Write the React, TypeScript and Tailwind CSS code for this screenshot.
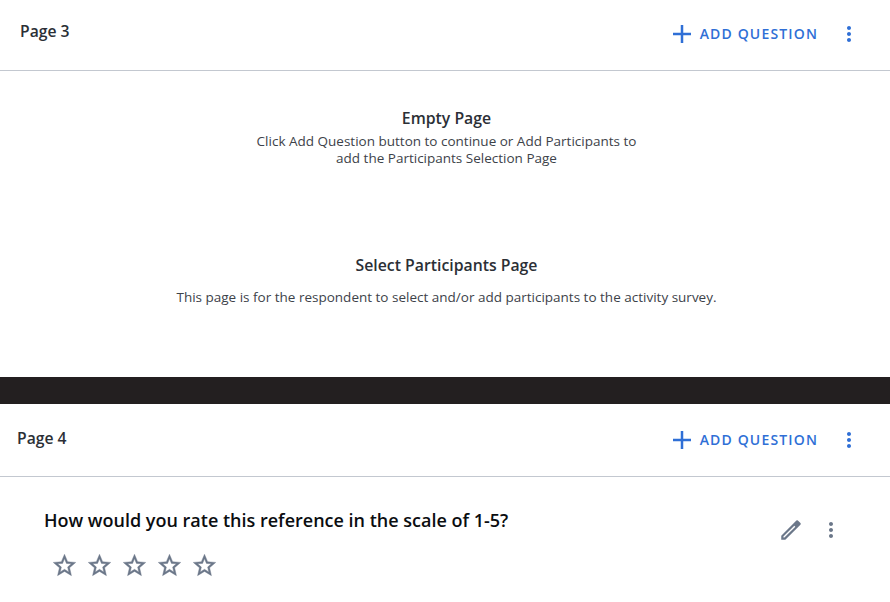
import React from 'react';

const font = "font-['Open_Sans',sans-serif]";

const PlusIcon = () => (
    <svg width="24" height="24" viewBox="0 0 24 24" className="fill-[#2f6fd6]">
        <path d="M21 13.25h-7.75V21h-2.5v-7.75H3v-2.5h7.75V3h2.5v7.75H21z" />
    </svg>
);

const MoreIcon = ({ className }: { className: string }) => (
    <svg width="24" height="24" viewBox="0 0 24 24" className={className}>
        <path d="M12 8c1.1 0 2-.9 2-2s-.9-2-2-2-2 .9-2 2 .9 2 2 2zm0 2c-1.1 0-2 .9-2 2s.9 2 2 2 2-.9 2-2-.9-2-2-2zm0 6c-1.1 0-2 .9-2 2s.9 2 2 2 2-.9 2-2-.9-2-2-2z" />
    </svg>
);

const PencilIcon = () => (
    <svg width="26" height="26" viewBox="0 0 24 24" className="fill-[#6b7789]">
        <path
            fillRule="evenodd"
            d="M3 17.25V21h3.75L20.71 7.04a1 1 0 0 0 0-1.41l-2.34-2.34a1 1 0 0 0-1.41 0L3 17.25zM5.92 19H5v-.92L15.06 8.02l.92.92L5.92 19z"
        />
    </svg>
);

const StarIcon = () => (
    <svg width="27" height="27" viewBox="0 0 24 24" className="fill-[#6b7789] stroke-[#6b7789] stroke-[0.35]">
        <path d="M22 9.24l-7.19-.62L12 2 9.19 8.63 2 9.24l5.46 4.73L5.82 21 12 17.27 18.18 21l-1.63-7.03L22 9.24zM12 15.4l-3.76 2.27 1-4.28-3.32-2.88 4.38-.38L12 6.1l1.71 4.04 4.38.38-3.32 2.88 1 4.28L12 15.4z" />
    </svg>
);

const AddQuestion = () => (
    <div className="flex items-center">
        <PlusIcon />
        <span className="ml-[6px] -translate-y-px text-[14px] font-semibold tracking-[1.15px] text-[#2f6fd6]">ADD QUESTION</span>
        <div className="ml-[19px]"><MoreIcon className="fill-[#2f6fd6]" /></div>
    </div>
);

export default function App() {
    return (
        <div className={`w-[890px] h-[602px] overflow-hidden bg-white text-[#2b2f36] ${font}`}>
            <section className="h-[377px]">
                <header className="flex h-[71px] justify-between border-b border-[#c3c8d0] pl-5 pr-[29px]">
                    <h2 className="mt-[19px] text-[15.7px] leading-6 font-semibold">Page 3</h2>
                    <div className="mt-[22px] h-6"><AddQuestion /></div>
                </header>
                <div className="mt-[36px] pl-[3px] text-center">
                    <h3 className="text-[15.8px] leading-[22px] font-semibold">Empty Page</h3>
                    <p className="mt-[4px] text-[13.5px] leading-[17px] text-[#3d4249]">
                        Click Add Question button to continue or Add Participants to
                        <br />
                        add the Participants Selection Page
                    </p>
                </div>
                <div className="mt-[87px] pl-[3px] text-center">
                    <h3 className="text-[15.8px] leading-[22px] font-semibold">Select Participants Page</h3>
                    <p className="mt-[13px] text-[13.5px] leading-[17px] text-[#3d4249]">
                        This page is for the respondent to select and/or add participants to the activity survey.
                    </p>
                </div>
            </section>

            <div className="h-[27px] bg-[#231f20]" />

            <section>
                <header className="flex h-[73px] justify-between border-b border-[#c3c8d0] pl-[17px] pr-[29px]">
                    <h2 className="mt-[22px] text-[15.7px] leading-6 font-semibold">Page 4</h2>
                    <div className="mt-[24px] h-6"><AddQuestion /></div>
                </header>
                <div className="flex justify-between pl-11 pr-[47px]">
                    <div>
                        <h3 className="mt-[31px] text-[18px] leading-[24px] font-semibold text-[#0b0d10]">
                            How would you rate this reference in the scale of 1-5?
                        </h3>
                        <div className="mt-[20px] ml-[7px] flex gap-[8px]">
                            <StarIcon />
                            <StarIcon />
                            <StarIcon />
                            <StarIcon />
                            <StarIcon />
                        </div>
                    </div>
                    <div className="mt-[41px] flex h-6 items-center gap-[15px]">
                        <PencilIcon />
                        <MoreIcon className="fill-[#6b7789]" />
                    </div>
                </div>
            </section>
        </div>
    );
}
